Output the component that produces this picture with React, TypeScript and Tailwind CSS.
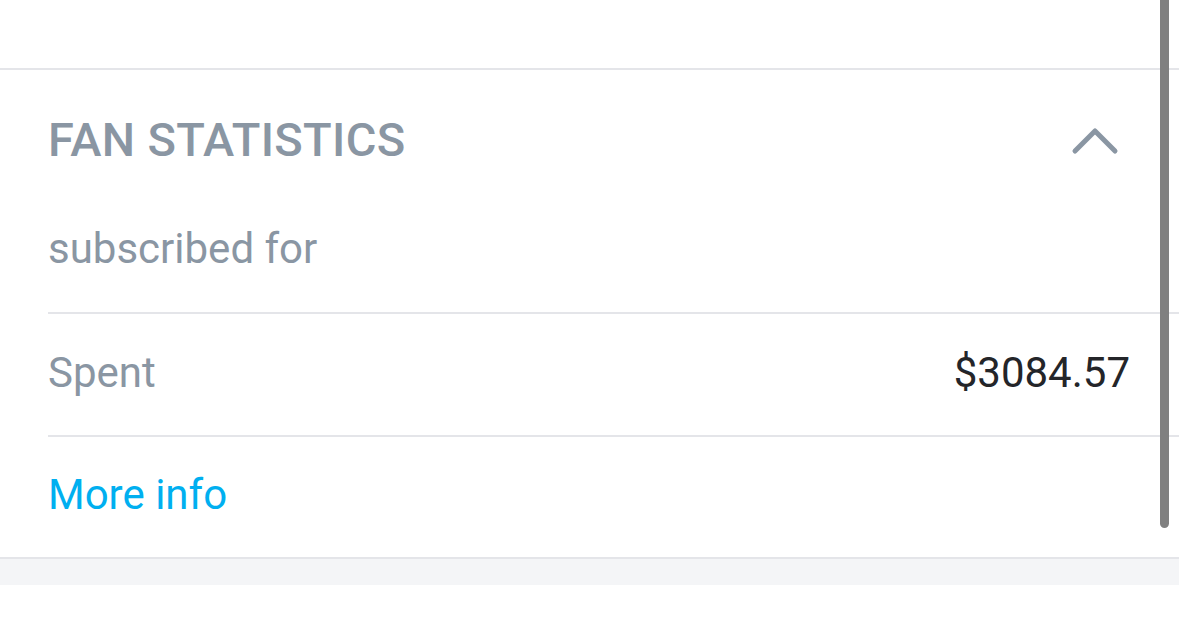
import React from 'react';

const ChevronUp: React.FC = () => (
  <svg width="48" height="30" viewBox="0 0 48 30" fill="none">
    <path d="M4 26 L24 6 L44 26" stroke="#8a96a3" strokeWidth="5" strokeLinecap="round" strokeLinejoin="round" />
  </svg>
);

const App: React.FC = () => {
  return (
    <div className="relative w-[1179px] h-[618px] bg-white overflow-hidden font-['Roboto',sans-serif]">
      <div className="h-[68px]" />
      <div className="border-t-2 border-b-2 border-[#e4e5e9]">
        <div className="flex items-center justify-between pl-[48px] pr-[60px] h-[140px]">
          <h2 className="text-[47px] font-medium text-[#8a96a3] uppercase tracking-[0.35px]">Fan statistics</h2>
          <ChevronUp />
        </div>
        <div className="pl-[48px]">
          <div className="h-[102px] flex items-center pb-[26px]">
            <span className="text-[42px] text-[#8a96a3]">subscribed for</span>
          </div>
          <div className="border-t-2 border-[#e4e5e9] h-[123px] flex items-center justify-between pr-[49px] pb-[4px]">
            <span className="text-[42px] text-[#8a96a3]">Spent</span>
            <span className="text-[42px] text-[#242529]">$3084.57</span>
          </div>
          <div className="border-t-2 border-[#e4e5e9] h-[122px] flex items-center pb-[5px]">
            <a className="text-[42px] text-[#00aff0]">More info</a>
          </div>
        </div>
      </div>
      <div className="h-[26px] bg-[#f4f5f7]" />
      <div className="absolute left-[1160px] top-0 w-[9px] h-[528px] bg-[#808080] rounded-b-[5px]" />
    </div>
  );
};

export default App;
